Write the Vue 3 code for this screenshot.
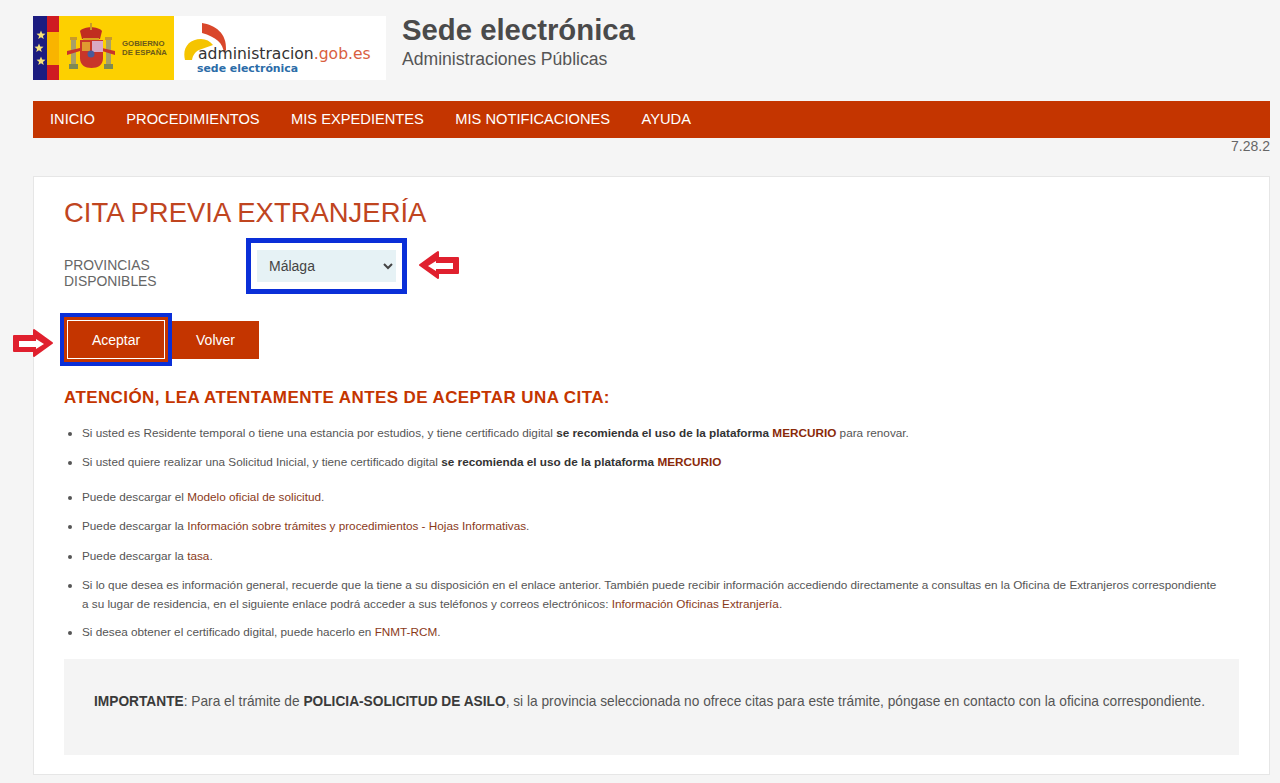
<template>
  <div class="page">
    <header class="top">
      <div class="logos">
        <div class="logo-gob">
          <svg class="flag" width="141" height="64" viewBox="0 0 141 64">
            <rect width="141" height="64" fill="#fdd000" />
            <rect x="14" width="12" height="64" fill="#f9b400" />
            <rect width="14" height="64" fill="#1c1c80" />
            <rect x="14" width="12" height="16" fill="#cf1b22" />
            <rect x="14" y="49" width="12" height="15" fill="#cf1b22" />
            <path
              v-for="s in stars"
              :key="s[1]"
              :transform="`translate(${s[0]} ${s[1]})`"
              d="M0-4.500l1.200 3.100 3.300.2-2.600 2.100.9 3.200L0 2.300-2.800 4.100l.9-3.200-2.600-2.100 3.300-.2z"
              fill="#f5e27a"
            />
            <rect x="38" y="24" width="5" height="24" fill="#a8a068" />
            <rect x="73" y="24" width="5" height="24" fill="#a8a068" />
            <rect x="37" y="21" width="7" height="3" fill="#c89a2a" />
            <rect x="72" y="21" width="7" height="3" fill="#c89a2a" />
            <rect x="36" y="48" width="9" height="5" fill="#7f8a52" />
            <rect x="71" y="48" width="9" height="5" fill="#7f8a52" />
            <path d="M34 35l13-3v3l-13 4zM82 35l-13-3v3l13 4z" fill="#c8352a" />
            <path d="M47 15c4-5 18-5 22 0l-2 8H49z" fill="#c02e20" />
            <path d="M50 22h16v2H50z" fill="#d9a020" />
            <rect x="57" y="7" width="2" height="7" fill="#c89a2a" />
            <path d="M47 24h23v18c0 7-5 10-11.500 10S47 49 47 42z" fill="#c8352a" />
            <rect x="59" y="25" width="11" height="11" fill="#d9a8c4" />
            <rect x="49" y="26" width="8" height="9" fill="#e09a30" />
            <circle cx="58" cy="38" r="3.500" fill="#4a5a9a" />
            <text x="89" y="30" class="gob-text">GOBIERNO</text>
            <text x="89" y="39" class="gob-text">DE ESPAÑA</text>
          </svg>
        </div>
        <div class="logo-admin">
          <svg class="swoosh" width="62" height="44" viewBox="0 0 62 44">
            <path d="M19 1c13 2 25 10 24 27l-2 3c-1-10-8-16-22-20z" fill="#d9472b" />
            <path d="M2 38c-3-12 4-21 16-21 5 0 9 2 12 6l-14 5c-4 2-6 5-7 10z" fill="#f5c400" />
          </svg>
          <div class="admin-name">administracion<span>.gob.es</span></div>
          <div class="admin-sub">sede electrónica</div>
        </div>
      </div>
      <div class="site-title">
        <div class="site-name">Sede electrónica</div>
        <div class="site-org">Administraciones Públicas</div>
      </div>
    </header>

    <nav class="menu">
      <a v-for="item in menu" :key="item">{{ item }}</a>
    </nav>
    <div class="version">7.28.2</div>

    <main class="card">
      <h1>CITA PREVIA EXTRANJERÍA</h1>

      <div class="form-row">
        <label>PROVINCIAS<br />DISPONIBLES</label>
        <div class="select-frame">
          <select>
            <option>Málaga</option>
          </select>
          <svg class="arrow arrow-left" width="42" height="30" viewBox="0 0 42 30">
            <path d="M2 15L20 2v6h20v15H20v5z" fill="#e0202e" stroke="#e0202e" stroke-width="2" stroke-linejoin="round" />
            <path d="M10 16l8-5v2h17v6H18v2z" fill="#fff" />
          </svg>
        </div>
      </div>

      <div class="buttons">
        <div class="btn-frame">
          <svg class="arrow arrow-right" width="42" height="30" viewBox="0 0 42 30">
            <path d="M40 15L22 2v6H2v15h20v5z" fill="#e0202e" stroke="#e0202e" stroke-width="2" stroke-linejoin="round" />
            <path d="M32 16l-8-5v2H7v6h17v2z" fill="#fff" />
          </svg>
          <button class="accept">Aceptar</button>
        </div>
        <button class="back">Volver</button>
      </div>

      <h2>ATENCIÓN, LEA ATENTAMENTE ANTES DE ACEPTAR UNA CITA:</h2>

      <ul class="notes">
        <li>Si usted es Residente temporal o tiene una estancia por estudios, y tiene certificado digital <b>se recomienda el uso de la plataforma <a>MERCURIO</a></b> para renovar.</li>
        <li class="gap-big">Si usted quiere realizar una Solicitud Inicial, y tiene certificado digital <b>se recomienda el uso de la plataforma <a>MERCURIO</a></b></li>
        <li>Puede descargar el <a>Modelo oficial de solicitud</a>.</li>
        <li class="gap-more">Puede descargar la <a>Información sobre trámites y procedimientos - Hojas Informativas</a>.</li>
        <li>Puede descargar la <a>tasa</a>.</li>
        <li class="gap-less">Si lo que desea es información general, recuerde que la tiene a su disposición en el enlace anterior. También puede recibir información accediendo directamente a consultas en la Oficina de Extranjeros correspondiente a su lugar de residencia, en el siguiente enlace podrá acceder a sus teléfonos y correos electrónicos: <a>Información Oficinas Extranjería</a>.</li>
        <li>Si desea obtener el certificado digital, puede hacerlo en <a>FNMT-RCM</a>.</li>
      </ul>

      <div class="notice">
        <b>IMPORTANTE</b>: Para el trámite de <b>POLICIA-SOLICITUD DE ASILO</b>, si la provincia seleccionada no ofrece citas para este trámite, póngase en contacto con la oficina correspondiente.
      </div>
    </main>
  </div>
</template>

<script setup>
const menu = ['INICIO', 'PROCEDIMIENTOS', 'MIS EXPEDIENTES', 'MIS NOTIFICACIONES', 'AYUDA']
const stars = [[8, 19], [6, 32], [8, 45]]
</script>

<style>
html,
body {
  background: #f5f5f5;
}
</style>

<style scoped>
.page {
  height: 783px;
  overflow: hidden;
  padding: 0 10px 0 33px;
  box-sizing: border-box;
  font-family: "Liberation Sans", Arial, sans-serif;
  color: #555;
}

.top {
  display: flex;
  height: 101px;
}

.logos {
  display: flex;
  height: 64px;
  margin-top: 16px;
}

.logo-gob {
  width: 141px;
  height: 64px;
}

.flag {
  display: block;
}

.gob-text {
  font-size: 7.800px;
  font-weight: bold;
  font-family: "Liberation Sans", sans-serif;
  fill: #6b5a1a;
}

.logo-admin {
  position: relative;
  width: 212px;
  height: 64px;
  background: #fff;
  overflow: hidden;
}

.swoosh {
  position: absolute;
  left: 9px;
  top: 6px;
}

.admin-name {
  position: absolute;
  left: 24px;
  top: 30px;
  font-family: "DejaVu Sans", sans-serif;
  font-size: 15.600px;
  line-height: 16px;
  color: #333;
  white-space: nowrap;
}

.admin-name span {
  color: #d9603f;
}

.admin-sub {
  position: absolute;
  left: 23px;
  top: 46px;
  font-family: "DejaVu Sans", sans-serif;
  font-weight: bold;
  font-size: 10.900px;
  line-height: 14px;
  color: #2b6ca8;
  white-space: nowrap;
}

.site-title {
  margin-left: 16px;
  margin-top: 14px;
}

.site-name {
  font-size: 29.300px;
  font-weight: bold;
  line-height: 32px;
  color: #4a4a4a;
}

.site-org {
  font-size: 17.600px;
  line-height: 20px;
  margin-top: 3px;
  color: #555;
}

.menu {
  display: flex;
  gap: 31.500px;
  height: 37px;
  padding-left: 17px;
  background: #c43500;
  align-items: center;
}

.menu a {
  color: #fff;
  font-size: 14.660px;
  line-height: 37px;
}

.version {
  height: 38px;
  text-align: right;
  font-size: 14px;
  line-height: 16px;
  color: #666;
}

.card {
  height: 599px;
  box-sizing: border-box;
  padding: 19px 30px 0;
  background: #fff;
  border: 1px solid #e6e6e6;
}

h1 {
  margin: 0;
  font-size: 27.450px;
  font-weight: normal;
  line-height: 34px;
  color: #c0451f;
}

.form-row {
  display: flex;
  margin-top: 8px;
}

.form-row label {
  width: 182px;
  margin-top: 19px;
  font-size: 13.900px;
  line-height: 16px;
  color: #666;
}

.select-frame {
  position: relative;
  box-sizing: border-box;
  width: 161px;
  height: 56px;
  padding: 7px 6px;
  border: 5px solid #0a2fd8;
  background: #fff;
}

select {
  display: block;
  width: 139px;
  height: 32px;
  padding-left: 8px;
  border: none;
  border-radius: 0;
  background: #e6f2f5;
  font-family: inherit;
  font-size: 14px;
  color: #444;
}

.arrow {
  position: absolute;
}

.arrow-left {
  left: 167px;
  top: 7px;
}

.arrow-right {
  left: -52px;
  top: 11px;
}

.buttons {
  display: flex;
  align-items: center;
  margin-top: 19px;
  margin-left: -4px;
}

.btn-frame {
  position: relative;
  box-sizing: border-box;
  width: 112px;
  height: 53px;
  padding: 3px;
  border: 4px solid #0a2fd8;
  background: #c43500;
}

.btn-frame .accept {
  display: block;
  width: 100%;
  height: 100%;
  border: 1px solid #fff;
}

button {
  background: #c43500;
  color: #fff;
  font-family: inherit;
  font-size: 14px;
  border: none;
  padding: 0;
}

.back {
  width: 87px;
  height: 38px;
}

h2 {
  margin: 22px 0 0;
  font-size: 17px;
  font-weight: bold;
  line-height: 20px;
  letter-spacing: 0.400px;
  color: #c43500;
}

.notes {
  margin: 15px 0 0;
  padding: 0 18px 0 18px;
  font-size: 11.750px;
  line-height: 19px;
  color: #555;
}

.notes li {
  margin-bottom: 10px;
}

.notes li.gap-big {
  margin-bottom: 16px;
}

.notes li.gap-more {
  margin-bottom: 11px;
}

.notes li.gap-less {
  margin-bottom: 9px;
}

.notes b {
  color: #333;
}

.notes a {
  color: #8a3a1a;
}

.notes b a {
  color: #8a2a0a;
}

.notice {
  box-sizing: border-box;
  height: 96px;
  margin-top: 18px;
  padding: 34px 30px 0;
  background: #f4f4f4;
  font-size: 13.720px;
  line-height: 18px;
  color: #555;
}

.notice b {
  color: #3a3a3a;
}
</style>
